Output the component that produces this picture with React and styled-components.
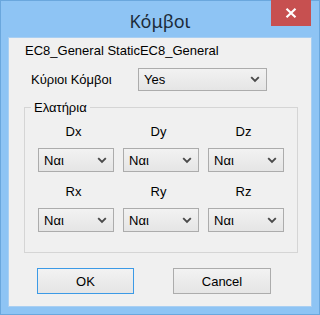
import React from "react";
import styled, { createGlobalStyle } from "styled-components";

const GlobalStyle = createGlobalStyle`
  html, body {
    margin: 0;
    padding: 0;
    background: #ffffff;
  }
  * {
    box-sizing: border-box;
  }
`;

const Window = styled.div`
  width: 320px;
  height: 315px;
  background: #8ec4f4;
  border: 1px solid #6aa7dd;
  display: flex;
  flex-direction: column;
  font-family: "Liberation Sans", Arial, sans-serif;
  font-size: 13px;
  color: #000;
`;

const TitleBar = styled.div`
  position: relative;
  height: 36px;
  display: flex;
  align-items: center;
  justify-content: center;
  padding-top: 4px;
`;

const Title = styled.div`
  font-family: "Noto Sans", "Open Sans", sans-serif;
  font-size: 18px;
  color: #1c2b3a;
`;

const CloseButton = styled.div`
  position: absolute;
  top: -1px;
  right: 8px;
  width: 40px;
  height: 26px;
  background: #c75050;
  display: flex;
  align-items: center;
  justify-content: center;
`;

const Client = styled.div`
  flex: 1;
  margin: 0 7px 7px 7px;
  background: #f0f0f0;
  border: 1px solid #a9cff2;
  padding: 5px 0 0 16px;
  display: flex;
  flex-direction: column;
`;

const Line = styled.div`
  line-height: 15px;
`;

const FormRow = styled.div`
  display: flex;
  align-items: center;
  margin-top: 10px;
  padding-left: 6px;
`;

const RowLabel = styled.div`
  width: 107px;
  line-height: 15px;
`;

const Box = styled.div`
  width: ${(p) => p.$w}px;
  height: ${(p) => p.$h || 23}px;
  border: 1px solid #acacac;
  background: linear-gradient(#f2f2f2, #e5e5e5);
  display: flex;
  align-items: center;
  justify-content: space-between;
  padding: 0 6px 0 5px;
  line-height: 15px;
`;

const Chevron = () => (
  <svg width="10" height="7" viewBox="0 0 10 7">
    <path d="M1.2 1.2 L5 5 L8.8 1.2" fill="none" stroke="#4a4a4a" strokeWidth="1.9" />
  </svg>
);

const Dropdown = ({ value, width, height }) => (
  <Box $w={width} $h={height}>
    <span>{value}</span>
    <Chevron />
  </Box>
);

const Group = styled.fieldset`
  margin: 9px 0 0 -1px;
  width: 274px;
  border: 1px solid #d5d5d5;
  padding: 0;
  min-width: 0;
`;

const Legend = styled.legend`
  margin-left: 6px;
  padding: 0 3px;
  line-height: 15px;
`;

const Grid = styled.div`
  display: grid;
  grid-template-columns: repeat(3, 76px);
  column-gap: 9px;
  row-gap: 12px;
  padding: 9px 13px 20px 13px;
`;

const Cell = styled.div`
  display: flex;
  flex-direction: column;
  align-items: center;
  gap: 9px;
`;

const AxisLabel = styled.div`
  line-height: 15px;
  margin-right: 5px;
`;

const Buttons = styled.div`
  display: flex;
  gap: 39px;
  margin-top: 15px;
  padding-left: 12px;
`;

const Button = styled.div`
  width: ${(p) => p.$w}px;
  height: 26px;
  border: 1px solid ${(p) => (p.$default ? "#3c9ae6" : "#acacac")};
  background: linear-gradient(#f2f2f2, #e5e5e5);
  display: flex;
  align-items: center;
  justify-content: center;
  line-height: 15px;
`;

const axes = ["Dx", "Dy", "Dz", "Rx", "Ry", "Rz"];

export default function App() {
  return (
    <>
      <GlobalStyle />
      <Window>
        <TitleBar>
          <Title>Κόμβοι</Title>
          <CloseButton>
            <svg width="12" height="10" viewBox="0 0 12 10">
              <path d="M1.5 0.8 L10.5 9.2 M10.5 0.8 L1.5 9.2" stroke="#fff" strokeWidth="2.2" />
            </svg>
          </CloseButton>
        </TitleBar>
        <Client>
          <Line>EC8_General StaticEC8_General</Line>
          <FormRow>
            <RowLabel>Κύριοι Κόμβοι</RowLabel>
            <Dropdown value="Yes" width={129} />
          </FormRow>
          <Group>
            <Legend>Ελατήρια</Legend>
            <Grid>
              {axes.map((a) => (
                <Cell key={a}>
                  <AxisLabel>{a}</AxisLabel>
                  <Dropdown value="Nαι" width={76} height={24} />
                </Cell>
              ))}
            </Grid>
          </Group>
          <Buttons>
            <Button $w={97} $default>OK</Button>
            <Button $w={98}>Cancel</Button>
          </Buttons>
        </Client>
      </Window>
    </>
  );
}
